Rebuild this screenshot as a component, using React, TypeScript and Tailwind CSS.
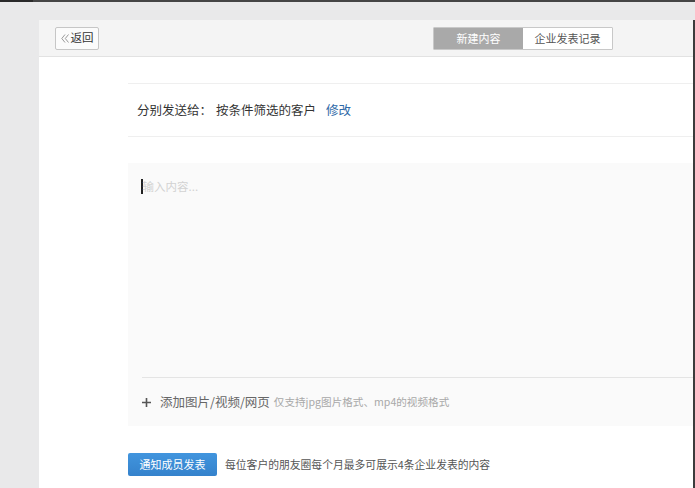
import React from "react";

export default function App() {
  const font = { fontFamily: '"Noto Sans CJK SC", "Noto Sans", sans-serif' };
  return (
    <div className="w-[695px] h-[488px] bg-[#e9e9ea] flex flex-col overflow-hidden" style={font}>
      <div className="h-[2px] flex shrink-0">
        <div className="w-[33px] bg-[#2a2a2a]" />
        <div className="flex-1 bg-[#454545]" />
      </div>
      <div className="flex flex-1 pt-[18px] pl-[39px] min-h-0">
        <div className="flex-1 bg-white flex flex-col min-w-0">
          {/* header */}
          <div className="h-[37px] shrink-0 bg-[#f4f4f4] border-b border-[#e2e2e2] flex items-center pl-[16px] pr-[80px]">
            <button className="h-[23px] w-[44px] border border-[#c6c6c6] rounded-[2px] bg-[#fbfbfb] flex items-center justify-center gap-[2px] text-[11.5px] text-[#333]">
              <svg width="8" height="9" viewBox="0 0 8 9" fill="none" stroke="#999" strokeWidth="1">
                <path d="M4 0.5 L0.8 4.5 L4 8.5" />
                <path d="M7.5 0.5 L4.3 4.5 L7.5 8.5" />
              </svg>
              <span>返回</span>
            </button>
            <div className="ml-auto flex h-[23px] border border-[#c8c8c8] rounded-[1px] overflow-hidden text-[11px]">
              <div className="w-[89px] bg-[#a9a9a9] text-white flex items-center justify-center">新建内容</div>
              <div className="w-[89px] bg-white text-[#555] flex items-center justify-center">企业发表记录</div>
            </div>
          </div>
          {/* body */}
          <div className="pl-[89px] pt-[26px] flex flex-col">
            <div className="h-[54px] border-t border-b border-[#efefef] flex items-center pl-[9px] text-[12.5px] text-[#333]">
              <span>分别发送给：</span>
              <span className="ml-[4px]">按条件筛选的客户</span>
              <span className="ml-[10px] text-[#2f6aa8]">修改</span>
            </div>
            <div className="mt-[26px] h-[263px] bg-[#fafafa] flex flex-col">
              <div className="flex-1 pt-[16px] pl-[13px] flex items-start">
                <div className="w-[1.5px] h-[15px] bg-[#222]" />
                <span className="text-[11.5px] text-[#d2d2d2] leading-[15px]">输入内容...</span>
              </div>
              <div className="ml-[14px] border-t border-[#e4e4e4] h-[49px] flex items-center">
                <svg width="9" height="9" viewBox="0 0 9 9" className="mr-[9px]">
                  <path d="M4.5 0 V9 M0 4.5 H9" stroke="#555" strokeWidth="1.6" />
                </svg>
                <span className="text-[12.5px] text-[#666]">添加图片/视频/网页</span>
                <span className="ml-[4px] text-[10.6px] text-[#a8a8a8]">仅支持jpg图片格式、mp4的视频格式</span>
              </div>
            </div>
            <div className="mt-[27px] flex items-center">
              <button className="w-[89px] h-[23px] rounded-[2px] bg-gradient-to-b from-[#4195de] to-[#3582cc] text-white text-[11px] flex items-center justify-center">
                通知成员发表
              </button>
              <span className="ml-[8px] text-[10.8px] text-[#555]">每位客户的朋友圈每个月最多可展示4条企业发表的内容</span>
            </div>
          </div>
        </div>
        <div className="w-[2px] bg-[#3c3c3c]" />
      </div>
    </div>
  );
}
